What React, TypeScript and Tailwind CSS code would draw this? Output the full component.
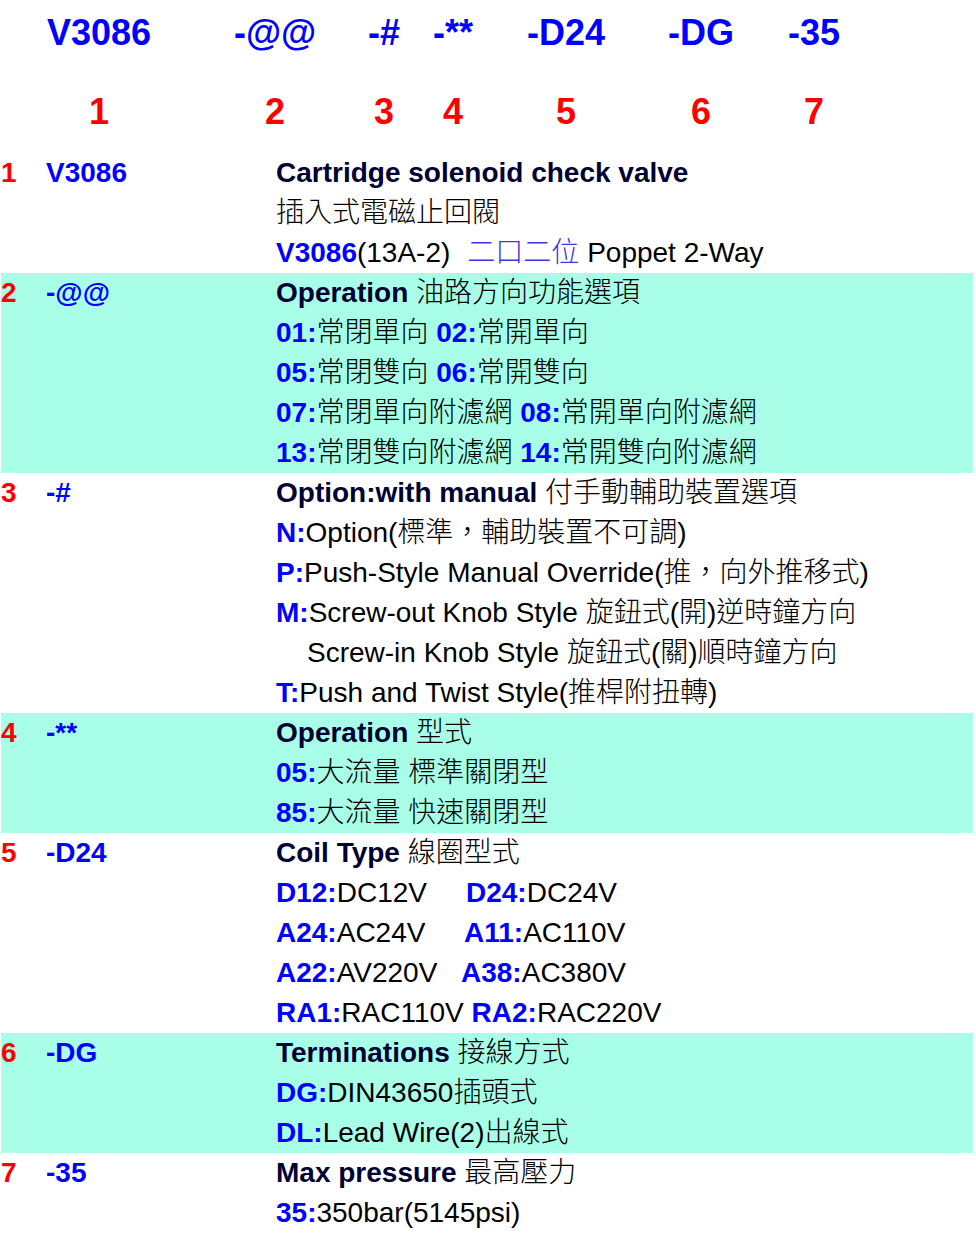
import type { ReactNode } from 'react';

const FONT = '"Liberation Sans", Arial, "Noto Sans CJK TC", sans-serif';

const header = [
  { code: 'V3086', num: '1' },
  { code: '-@@', num: '2' },
  { code: '-#', num: '3' },
  { code: '-**', num: '4' },
  { code: '-D24', num: '5' },
  { code: '-DG', num: '6' },
  { code: '-35', num: '7' },
];

const B = ({ children }: { children: ReactNode }) => (
  <span className="font-bold text-[#0000ff]">{children}</span>
);
const H = ({ children }: { children: ReactNode }) => (
  <span className="font-bold text-[#000033]">{children}</span>
);

type Row = { num: string; code: string; teal?: boolean; lines: ReactNode[] };

const rows: Row[] = [
  {
    num: '1',
    code: 'V3086',
    lines: [
      <H>Cartridge solenoid check valve</H>,
      <>插入式電磁止回閥</>,
      <>
        <B>V3086</B>(13A-2)
        <span className="ml-[17px] text-[#3a3ad8]">二口二位</span> Poppet 2-Way
      </>,
    ],
  },
  {
    num: '2',
    code: '-@@',
    teal: true,
    lines: [
      <><H>Operation</H> 油路方向功能選項</>,
      <><B>01:</B>常閉單向 <B>02:</B>常開單向</>,
      <><B>05:</B>常閉雙向 <B>06:</B>常開雙向</>,
      <><B>07:</B>常閉單向附濾網 <B>08:</B>常開單向附濾網</>,
      <><B>13:</B>常閉雙向附濾網 <B>14:</B>常開雙向附濾網</>,
    ],
  },
  {
    num: '3',
    code: '-#',
    lines: [
      <><H>Option:with manual</H> 付手動輔助裝置選項</>,
      <><B>N:</B>Option(標準，輔助裝置不可調)</>,
      <><B>P:</B>Push-Style Manual Override(推，向外推移式)</>,
      <><B>M:</B>Screw-out Knob Style 旋鈕式(開)逆時鐘方向</>,
      <span className="pl-[31px]">Screw-in Knob Style 旋鈕式(關)順時鐘方向</span>,
      <><B>T:</B>Push and Twist Style(推桿附扭轉)</>,
    ],
  },
  {
    num: '4',
    code: '-**',
    teal: true,
    lines: [
      <><H>Operation</H> 型式</>,
      <><B>05:</B>大流量 標準關閉型</>,
      <><B>85:</B>大流量 快速關閉型</>,
    ],
  },
  {
    num: '5',
    code: '-D24',
    lines: [
      <><H>Coil Type</H> 線圈型式</>,
      <><span className="inline-block w-[190px]"><B>D12:</B>DC12V</span><B>D24:</B>DC24V</>,
      <><span className="inline-block w-[188px]"><B>A24:</B>AC24V</span><B>A11:</B>AC110V</>,
      <><span className="inline-block w-[185px]"><B>A22:</B>AV220V</span><B>A38:</B>AC380V</>,
      <><B>RA1:</B>RAC110V <B>RA2:</B>RAC220V</>,
    ],
  },
  {
    num: '6',
    code: '-DG',
    teal: true,
    lines: [
      <><H>Terminations</H> 接線方式</>,
      <><B>DG:</B>DIN43650插頭式</>,
      <><B>DL:</B>Lead Wire(2)出線式</>,
    ],
  },
  {
    num: '7',
    code: '-35',
    lines: [
      <><H>Max pressure</H> 最高壓力</>,
      <><B>35:</B>350bar(5145psi)</>,
    ],
  },
];

export default function App() {
  return (
    <div className="h-[1237px] w-[976px] bg-white text-black" style={{ fontFamily: FONT }}>
      <div className="grid h-[66px] grid-cols-[198px_154px_64px_74px_152px_118px_108px] items-center">
        {header.map(h => (
          <div key={h.num} className="text-center text-[36px] font-bold leading-none text-[#0000ff]">{h.code}</div>
        ))}
      </div>
      <div className="mt-[26px] grid h-[40px] grid-cols-[198px_154px_64px_74px_152px_118px_108px] items-center">
        {header.map(h => (
          <div key={h.num} className="text-center text-[36px] font-bold leading-none text-[#ff0000]">{h.num}</div>
        ))}
      </div>

      <div className="mt-[21px] ml-[1px] w-[972px]">
        {rows.map(row => (
          <div
            key={row.num}
            className={`grid grid-cols-[45px_230px_1fr] text-[28px] leading-[40px] ${row.teal ? 'bg-[#a8fee6]' : ''}`}
          >
            <div className="font-bold text-[#ff0000]">{row.num}</div>
            <div className="font-bold text-[#0000ff]">{row.code}</div>
            <div className="font-light">
              {row.lines.map((line, i) => (
                <div key={i} className="h-[40px] whitespace-nowrap">{line}</div>
              ))}
            </div>
          </div>
        ))}
      </div>
    </div>
  );
}
